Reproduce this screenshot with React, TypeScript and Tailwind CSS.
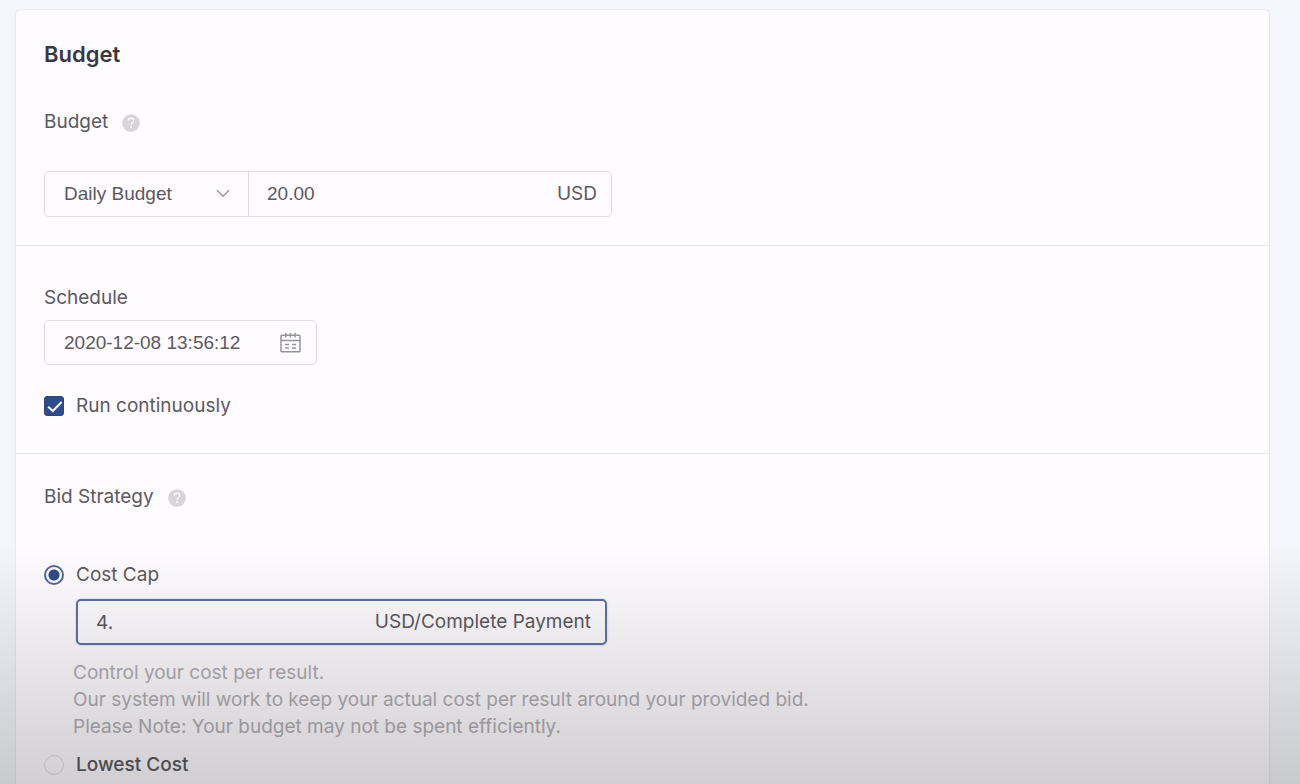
import { useState } from "react";

export default function BudgetSettings() {
  const [budgetType, setBudgetType] = useState("daily");
  const [budget, setBudget] = useState("20.00");
  const [startTime, setStartTime] = useState("2020-12-08 13:56:12");
  const [runContinuously, setRunContinuously] = useState(true);
  const [strategy, setStrategy] = useState("cost-cap");
  const [bid, setBid] = useState("4.");

  return (
    <div className="relative flex min-h-screen flex-col bg-[#f4f6fb] pt-[9px] pr-[30px] pl-[15px] font-['Inter',sans-serif] text-[19px] leading-7 text-[#5c5960]">
      <main className="flex-1 rounded-t-md border border-b-0 border-[#eae9f0] bg-[#fefcff] shadow-xs">
        {/* Budget */}
        <section className="border-b border-[#e8e8ef] px-7 pt-[30px] pb-7">
          <h1 className="text-[22px] font-semibold text-[#3a383f]">Budget</h1>
          <div className="mt-10 flex items-center gap-3.5">
            <label htmlFor="budget">Budget</label>
            <HelpButton label="About budget" />
          </div>
          <div className="mt-[35px] flex h-[46px] max-w-[568px] rounded-[5px] border border-[#dedde4] font-['Liberation_Sans',sans-serif]">
            <div className="relative w-[204px] border-r border-[#dedde4]">
              <select
                aria-label="Budget type"
                value={budgetType}
                onChange={(e) => setBudgetType(e.target.value)}
                className="h-full w-full appearance-none bg-transparent pr-10 pl-[19px] outline-none"
              >
                <option value="daily">Daily Budget</option>
                <option value="lifetime">Lifetime Budget</option>
              </select>
              <svg
                className="pointer-events-none absolute top-1/2 right-[17px] h-4 w-4 -translate-y-1/2"
                viewBox="0 0 16 16"
                fill="none"
                stroke="#99979f"
                strokeWidth="1.5"
              >
                <path d="M2 4.2l6 6L14 4.2" />
              </svg>
            </div>
            <input
              id="budget"
              value={budget}
              onChange={(e) => setBudget(e.target.value)}
              className="min-w-0 flex-1 bg-transparent pl-[18px] outline-none"
            />
            <span className="flex items-center pr-3.5 font-['Inter',sans-serif]">
              USD
            </span>
          </div>
        </section>

        {/* Schedule */}
        <section className="border-b border-[#e8e8ef] px-7 pt-[38px] pb-[33px]">
          <label htmlFor="start-time" className="block">
            Schedule
          </label>
          <div className="mt-2 flex h-[45px] max-w-[273px] items-center rounded-[5px] border border-[#dedde4] pr-[15px]">
            <input
              id="start-time"
              value={startTime}
              onChange={(e) => setStartTime(e.target.value)}
              className="h-full min-w-0 flex-1 bg-transparent pl-[19px] font-['Liberation_Sans',sans-serif] outline-none"
            />
            <button type="button" aria-label="Open calendar">
              <CalendarIcon />
            </button>
          </div>
          <label className="mt-[27px] flex items-center gap-3">
            <span className="relative h-5 w-5">
              <input
                type="checkbox"
                checked={runContinuously}
                onChange={(e) => setRunContinuously(e.target.checked)}
                className="peer block h-5 w-5 appearance-none rounded-[3px] border border-[#c4c3ca] checked:border-[#2c4480] checked:bg-[#304b8b]"
              />
              <svg
                className="pointer-events-none absolute inset-0 hidden h-5 w-5 peer-checked:block"
                viewBox="0 0 20 20"
                fill="none"
                stroke="#f4f6ff"
                strokeWidth="2.1"
              >
                <path d="M4.2 10.8l4.6 4.2 8.8-9" />
              </svg>
            </span>
            Run continuously
          </label>
        </section>

        {/* Bid strategy */}
        <section className="px-7 pt-[29px]">
          <div className="flex items-center gap-3.5">
            <h2>Bid Strategy</h2>
            <HelpButton label="About bid strategy" />
          </div>
          <label className="mt-[50px] flex items-center gap-3">
            <StrategyRadio
              value="cost-cap"
              selected={strategy}
              onSelect={setStrategy}
            />
            Cost Cap
          </label>
          <div className="mt-[10px] ml-8 flex h-[46px] max-w-[531px] items-center rounded-[5px] border-2 border-[#6071a3] bg-[#fefcff] px-3.5 shadow-[0_0_2px_#b4c1e6]">
            <input
              aria-label="Bid"
              value={bid}
              onChange={(e) => setBid(e.target.value)}
              className="h-full min-w-0 flex-1 bg-transparent pl-1 outline-none"
            />
            <span>USD/Complete Payment</span>
          </div>
          <p className="mt-3.5 ml-[29px] leading-[27px] text-[#b1aeb4]">
            Control your cost per result.
            <br />
            Our system will work to keep your actual cost per result around your
            provided bid.
            <br />
            Please Note: Your budget may not be spent efficiently.
          </p>
          <label className="mt-[11px] flex items-center gap-3">
            <StrategyRadio
              value="lowest-cost"
              selected={strategy}
              onSelect={setStrategy}
            />
            <span className="font-medium">Lowest Cost</span>
          </label>
        </section>
      </main>

      {/* Bottom shade */}
      <div className="pointer-events-none absolute inset-x-0 bottom-0 h-60 bg-linear-to-b from-black/0 to-black/18" />
    </div>
  );
}

function HelpButton({ label }: { label: string }) {
  return (
    <button type="button" aria-label={label} className="mt-0.5">
      <svg className="h-[18px] w-[18px]" viewBox="0 0 18 18" fill="none">
        <circle cx="9" cy="9" r="8.8" fill="#d7d4da" />
        <path
          d="M6.3 6.8c.1-1.7 1.2-2.7 2.8-2.7 1.5 0 2.6.9 2.6 2.3 0 1.1-.6 1.7-1.4 2.3-.8.5-1.2.9-1.2 2"
          stroke="#fff"
          strokeWidth="1.3"
        />
        <circle cx="9.1" cy="13" r="0.9" fill="#fff" />
      </svg>
    </button>
  );
}

type StrategyRadioProps = {
  value: string;
  selected: string;
  onSelect: (value: string) => void;
};

function StrategyRadio({ value, selected, onSelect }: StrategyRadioProps) {
  return (
    <input
      type="radio"
      name="strategy"
      value={value}
      checked={selected === value}
      onChange={() => onSelect(value)}
      className="h-5 w-5 appearance-none rounded-full border border-[#dddbe0] checked:border-2 checked:border-[#566796] checked:bg-[radial-gradient(circle,#304b8b_5px,#fefcff_6px)]"
    />
  );
}

function CalendarIcon() {
  return (
    <svg
      className="h-5 w-[21px]"
      viewBox="0 0 21 20"
      fill="none"
      stroke="#98949c"
      strokeWidth="1.5"
    >
      <rect x="1" y="2.2" width="19" height="16.6" rx="0.8" />
      <path d="M1 7.6h19M5.8 0v4.6M10.5 0v4.6M15.2 0v4.6" />
      <path d="M5 11.4h4M12 11.4h4M5 15h4M12 15h4" />
    </svg>
  );
}
